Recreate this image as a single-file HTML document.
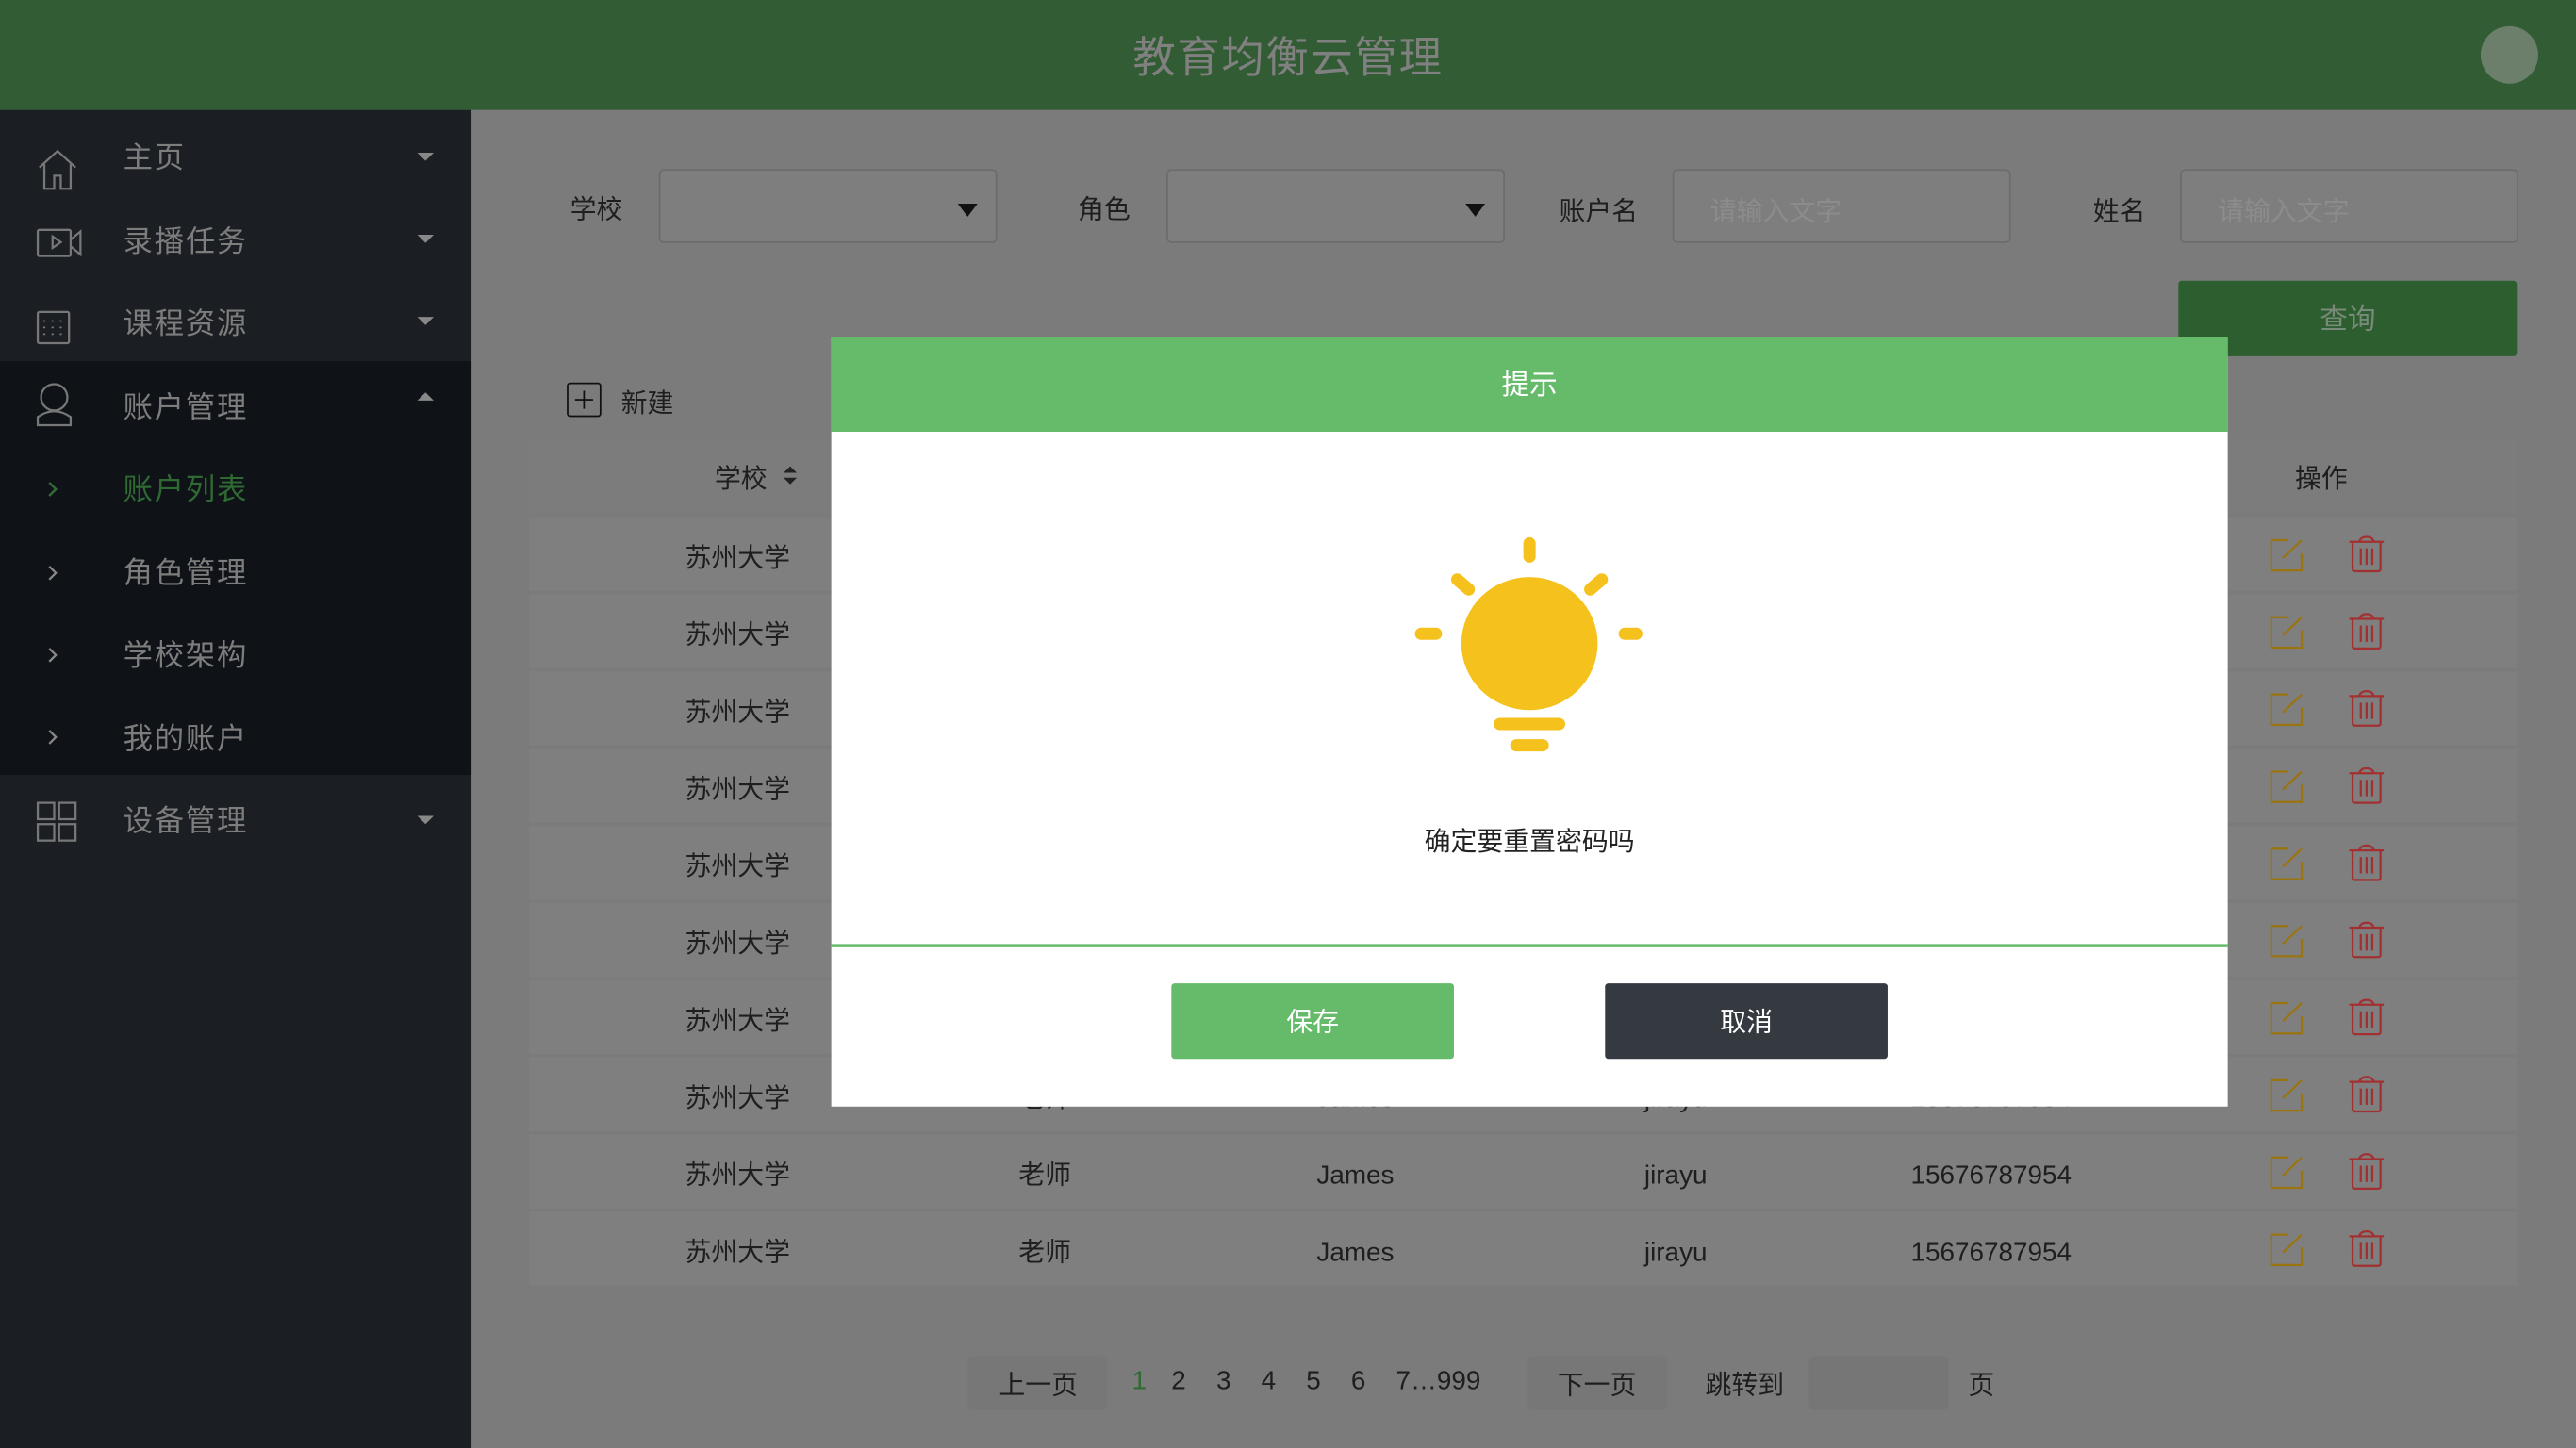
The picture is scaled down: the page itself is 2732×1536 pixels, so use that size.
<!DOCTYPE html>
<html><head><meta charset="utf-8"><style>
*{margin:0;padding:0;box-sizing:border-box}
html,body{width:2732px;height:1536px;overflow:hidden;background:#7b7b7b}
#w{position:absolute;left:0;top:0;width:1568px;height:882px;transform-origin:0 0;transform:scale(1.74235,1.74150);font-family:"Liberation Sans","Noto Sans CJK SC",sans-serif;color:#1e1e1e}
.a{position:absolute}
.hdr{left:0;top:0;width:1568px;height:67px;background:#325c34}
.side{left:0;top:67px;width:287px;height:815px;background:#1b1e23}
.sub{left:0;top:220px;width:287px;height:252px;background:#0f1318}
.mi{position:absolute;left:75px;font-size:18px;color:#7d7d7d;letter-spacing:1px;margin-top:-2px}
.car{position:absolute;left:254px;width:0;height:0;border-left:5px solid transparent;border-right:5px solid transparent}
.lbl{font-size:16px;color:#1e1e1e;margin-top:-2px}
.inp{background:#7e7e7e;border:1px solid #6c6c6c;border-radius:3px;height:45px;width:206px}
.ph{font-size:16px;color:#8c8c8c;position:absolute;left:22px;top:11px}
.row{position:absolute;left:322px;width:1210px;height:45px;background:#7f7f7f}
.c{position:absolute;font-size:16px;transform:translateX(-50%);white-space:nowrap}
.k{margin-top:-3px}
.l{margin-top:3px}
.pb{background:#777;border-radius:3px;height:33px}
</style></head><body><div id="w">
<div class="a hdr"></div>
<div class="a" style="left:0;width:1568px;top:15px;text-align:center;font-size:26px;color:#808080;letter-spacing:1px">教育均衡云管理</div>
<div class="a" style="left:1510px;top:16px;width:35px;height:35px;border-radius:50%;background:#6b7f6b"></div>
<div class="a side"></div><div class="a sub"></div>
<svg class="a" style="left:0;top:67px" width="287" height="460" fill="none" stroke="#777" stroke-width="1.3">
<path d="M24 35 L35 25 L46 35 M27 33 V48 H33 V40 H37 V48 H43 V33"/>
<rect x="23" y="73" width="20" height="16" rx="1"/><path d="M43 79 L49 74 V88 L43 83 M32 77 L37 80.5 L32 84Z"/>
<rect x="23" y="123" width="19" height="19" rx="1"/><path d="M27 128v1M27 132v1M27 136v1M32 128v1M32 132v1M32 136v1M37 128v1M37 132v1M37 136v1" stroke-dasharray="1 2"/>
<circle cx="33" cy="175" r="8"/><path d="M23 192 V187 Q33 180 43 187 V192Z"/>
<path d="M30 227l4 4-4 4M30 278l4 4-4 4M30 328l4 4-4 4M30 378l4 4-4 4" stroke="#888"/>
<path d="M30 227l4 4-4 4" stroke="#2f6a33"/>
<rect x="23" y="422" width="10" height="10"/><rect x="36" y="422" width="10" height="10"/><rect x="23" y="435" width="10" height="10"/><rect x="36" y="435" width="10" height="10"/>
</svg>
<div class="mi" style="top:84px">主页</div><div class="car" style="top:93px;border-top:5px solid #888"></div>
<div class="mi" style="top:135px">录播任务</div><div class="car" style="top:143px;border-top:5px solid #888"></div>
<div class="mi" style="top:185px">课程资源</div><div class="car" style="top:193px;border-top:5px solid #888"></div>
<div class="mi" style="top:236px">账户管理</div><div class="car" style="top:239px;border-bottom:5px solid #888"></div>
<div class="mi" style="top:286px;color:#2f6a33">账户列表</div>
<div class="mi" style="top:337px">角色管理</div>
<div class="mi" style="top:387px">学校架构</div>
<div class="mi" style="top:438px">我的账户</div>
<div class="mi" style="top:488px">设备管理</div><div class="car" style="top:497px;border-top:5px solid #888"></div>
<div class="a lbl" style="left:347px;top:116px">学校</div>
<div class="a inp" style="left:401px;top:103px"><div class="a" style="left:181px;top:20px;border-left:6px solid transparent;border-right:6px solid transparent;border-top:8px solid #111"></div></div>
<div class="a lbl" style="left:656px;top:116px">角色</div>
<div class="a inp" style="left:710px;top:103px"><div class="a" style="left:181px;top:20px;border-left:6px solid transparent;border-right:6px solid transparent;border-top:8px solid #111"></div></div>
<div class="a lbl" style="left:949px;top:117px">账户名</div>
<div class="a inp" style="left:1018px;top:103px"><span class="ph">请输入文字</span></div>
<div class="a lbl" style="left:1274px;top:117px">姓名</div>
<div class="a inp" style="left:1327px;top:103px"><span class="ph">请输入文字</span></div>
<div class="a" style="left:1326px;top:171px;width:206px;height:46px;background:#2c5e2f;border-radius:2px;color:#7a8a7a;font-size:17px;text-align:center;line-height:48px">查询</div>
<div class="a" style="left:345px;top:233px;width:21px;height:21px;border:1px solid #111;border-radius:2px"><div class="a" style="left:4px;top:9px;width:11px;height:1px;background:#111"></div><div class="a" style="left:9px;top:4px;width:1px;height:11px;background:#111"></div></div>
<div class="a lbl" style="left:378px;top:234px">新建</div>
<div class="row" style="top:268px;background:#7c7c7c"></div>
<div class="c k" style="left:451px;top:281px">学校</div>
<div class="a" style="left:477px;top:284px;border-left:4px solid transparent;border-right:4px solid transparent;border-bottom:4px solid #222"></div>
<div class="a" style="left:477px;top:291px;border-left:4px solid transparent;border-right:4px solid transparent;border-top:4px solid #222"></div>
<div class="c k" style="left:1413px;top:281px">操作</div>
<div id="rows"></div>
<script>
var h='';for(var i=0;i<10;i++){var y=315+i*47;h+='<div class="row" style="top:'+y+'px"></div><div class="c k" style="left:449px;top:'+(y+14)+'px">苏州大学</div><div class="c k" style="left:636px;top:'+(y+14)+'px">老师</div><div class="c l" style="left:825px;top:'+(y+14)+'px">James</div><div class="c l" style="left:1020px;top:'+(y+14)+'px">jirayu</div><div class="c l" style="left:1212px;top:'+(y+14)+'px">15676787954</div><svg class="a" style="left:1380px;top:'+(y+10)+'px" width="80" height="26" fill="none" stroke-width="1.3"><path d="M13 4H2.5V22.5H21V12M9.5 15L21 4" stroke="#9a740f"/><path d="M50 5H71M56 5Q57 2 60.5 2Q64 2 65 5M52 5V21.5Q52 23 53.5 23H67.5Q69 23 69 21.5V5M57 9V19M60.5 9V19M64 9V19" stroke="#a33030"/></svg>';}
document.getElementById('rows').outerHTML=h;
</script>
<div class="a pb" style="left:589px;top:826px;width:85px"></div>
<div class="c k" style="left:632px;top:833px">上一页</div>
<div class="a" style="left:689px;top:833px;font-size:16px;color:#2f6a33">1</div>
<div class="a" style="left:713px;top:833px;font-size:16px;word-spacing:14px">2 3 4 5 6 7<span style="word-spacing:0">…999</span></div>
<div class="a pb" style="left:930px;top:826px;width:85px"></div>
<div class="c k" style="left:972px;top:833px">下一页</div>
<div class="c k" style="left:1062px;top:833px">跳转到</div>
<div class="a pb" style="left:1101px;top:826px;width:85px;background:#767676"></div>
<div class="c k" style="left:1206px;top:833px">页</div>
<div class="a" style="left:506px;top:205px;width:850px;height:469px;background:#fff">
<div class="a" style="left:0;top:0;width:850px;height:58px;background:#66bb6a;color:#fff;font-size:17px;text-align:center;line-height:60px">提示</div>
<svg class="a" style="left:350px;top:115px" width="150" height="145"><g fill="#f5c11d"><ellipse cx="75" cy="72" rx="41.5" ry="40.5"/><g stroke="#f5c11d" stroke-width="7.5" stroke-linecap="round"><path d="M75 11V19M31 33L38 39M119 33L112 39M9 66H18M133 66H140M57 121H93M67 134H83"/></g></g></svg>
<div class="a" style="left:0;width:850px;top:294px;text-align:center;font-size:16px;color:#222">确定要重置密码吗</div>
<div class="a" style="left:0;top:370px;width:850px;height:2px;background:#66bb6a"></div>
<div class="a" style="left:207px;top:394px;width:172px;height:46px;background:#66bb6a;border-radius:2px;color:#fff;font-size:16px;text-align:center;line-height:50px">保存</div>
<div class="a" style="left:471px;top:394px;width:172px;height:46px;background:#343a40;border-radius:2px;color:#fff;font-size:16px;text-align:center;line-height:50px">取消</div>
</div>
</div></body></html>
